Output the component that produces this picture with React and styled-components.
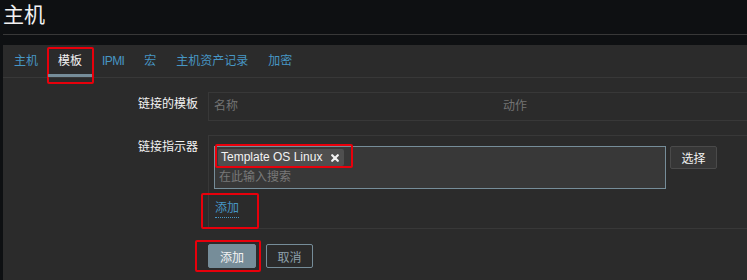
import React from 'react';
import styled, { createGlobalStyle } from 'styled-components';

const GlobalStyle = createGlobalStyle`
  html, body {
    margin: 0;
    padding: 0;
    background: #0e1012;
    overflow: hidden;
  }
  body {
    font-family: "Liberation Sans", Arial, "Noto Sans CJK SC", sans-serif;
    font-size: 12px;
    color: #f2f2f2;
  }
`;

const Page = styled.div`
  width: 780px;
  padding-left: 3px;
`;

const Header = styled.header`
  height: 34px;
  border-bottom: 1px solid #383838;
`;

const Title = styled.h1`
  margin: 0;
  font-size: 21px;
  font-weight: normal;
  line-height: 30px;
  color: #f2f2f2;
`;

const Panel = styled.div`
  margin-top: 10px;
  background: #2b2b2b;
  min-height: 240px;
`;

const TabBar = styled.nav`
  display: flex;
  height: 32px;
  padding-left: 1px;
  border-bottom: 1px solid #383838;
`;

const Tab = styled.div`
  position: relative;
  padding: 0 10px;
  line-height: 32px;
  letter-spacing: ${(p) => (p.$latin ? '-0.6px' : '0')};
  color: ${(p) => (p.$active ? '#f2f2f2' : '#4796c4')};

  &::after {
    content: '';
    display: ${(p) => (p.$active ? 'block' : 'none')};
    position: absolute;
    left: 0;
    right: 0;
    bottom: 0;
    height: 3px;
    background: #768d99;
  }
`;

const Highlight = styled.span`
  position: absolute;
  top: ${(p) => p.$top}px;
  left: ${(p) => p.$left}px;
  right: ${(p) => p.$right}px;
  bottom: ${(p) => p.$bottom}px;
  border: 2px solid #e8000b;
  border-radius: 2px;
  pointer-events: none;
`;

const Form = styled.div`
  display: flex;
  flex-direction: column;
  gap: 14px;
  padding-top: 14px;
`;

const Row = styled.div`
  display: grid;
  grid-template-columns: 195px 1fr;
  column-gap: 10px;
`;

const Label = styled.div`
  text-align: right;
  padding-top: 5px;
  line-height: 14px;
  color: #f2f2f2;
`;

const Table = styled.div`
  display: grid;
  grid-template-columns: 289px 1fr;
  height: 27px;
  border: 1px solid #383838;
`;

const HeadCell = styled.div`
  padding: 0 5px;
  line-height: 27px;
  color: #737373;
`;

const FieldBox = styled.div`
  border: 1px solid #383838;
  padding: 10px 5px;
`;

const SelectLine = styled.div`
  display: flex;
  align-items: flex-start;
  gap: 4px;
`;

const MultiSelect = styled.div`
  box-sizing: border-box;
  width: 452px;
  background: #383838;
  border: 1px solid #768d99;
  padding: 2px 0 4px 3px;
`;

const Chips = styled.div`
  display: flex;
`;

const Chip = styled.span`
  position: relative;
  display: inline-flex;
  align-items: center;
  gap: 9px;
  height: 17px;
  padding: 0 5px 0 3px;
  background: #4f4f4f;
  color: #f2f2f2;
  border-radius: 2px;
  line-height: 17px;
`;

const Placeholder = styled.div`
  margin-top: 4px;
  padding-left: 1px;
  line-height: 14px;
  color: #787878;
`;

const GreyButton = styled.button`
  height: 23px;
  width: 47px;
  padding: 0;
  background: #363636;
  border: 1px solid #4a4a4a;
  border-radius: 2px;
  color: #f2f2f2;
  font: inherit;
`;

const LinkLine = styled.div`
  margin-top: 12px;
  padding-left: 1px;
`;

const Link = styled.span`
  position: relative;
  display: inline-block;
  line-height: 14px;
  padding-bottom: 2px;
  color: #4796c4;
  border-bottom: 1px dotted #4796c4;
`;

const Actions = styled.div`
  display: flex;
  gap: 10px;
  margin-top: 1px;
`;

const Button = styled.button`
  position: relative;
  height: 24px;
  width: ${(p) => p.$width}px;
  padding: 0;
  border-radius: 2px;
  font: inherit;
  border: 1px solid #768d99;
  background: ${(p) => (p.$primary ? '#768d99' : 'transparent')};
  color: ${(p) => (p.$primary ? '#f2f2f2' : '#8ea2ad')};
`;

const CloseIcon = () => (
  <svg width="8" height="8" viewBox="0 0 8 8">
    <path d="M1.2 1.2 L6.8 6.8 M6.8 1.2 L1.2 6.8" stroke="#f2f2f2" strokeWidth="2.2" strokeLinecap="round" />
  </svg>
);

const tabs = ['主机', '模板', 'IPMI', '宏', '主机资产记录', '加密'];

export default function App() {
  return (
    <Page>
      <GlobalStyle />
      <Header>
        <Title>主机</Title>
      </Header>
      <Panel>
        <TabBar>
          {tabs.map((t) => (
            <Tab key={t} $active={t === '模板'} $latin={t === 'IPMI'}>
              {t}
              {t === '模板' && <Highlight $top={2} $left={-1} $right={-2} $bottom={-7} />}
            </Tab>
          ))}
        </TabBar>
        <Form>
          <Row>
            <Label>链接的模板</Label>
            <Table>
              <HeadCell>名称</HeadCell>
              <HeadCell>动作</HeadCell>
            </Table>
          </Row>
          <Row>
            <Label>链接指示器</Label>
            <FieldBox>
              <SelectLine>
                <MultiSelect>
                  <Chips>
                    <Chip>
                      Template OS Linux
                      <CloseIcon />
                      <Highlight $top={-5} $left={-3} $right={-9} $bottom={-2} />
                    </Chip>
                  </Chips>
                  <Placeholder>在此输入搜索</Placeholder>
                </MultiSelect>
                <GreyButton>选择</GreyButton>
              </SelectLine>
              <LinkLine>
                <Link>
                  添加
                  <Highlight $top={-8} $left={-14} $right={-20} $bottom={-12} />
                </Link>
              </LinkLine>
            </FieldBox>
          </Row>
          <Row>
            <div />
            <Actions>
              <Button $primary $width={48}>
                添加
                <Highlight $top={-5} $left={-14} $right={-6} $bottom={-5} />
              </Button>
              <Button $width={47}>取消</Button>
            </Actions>
          </Row>
        </Form>
      </Panel>
    </Page>
  );
}
